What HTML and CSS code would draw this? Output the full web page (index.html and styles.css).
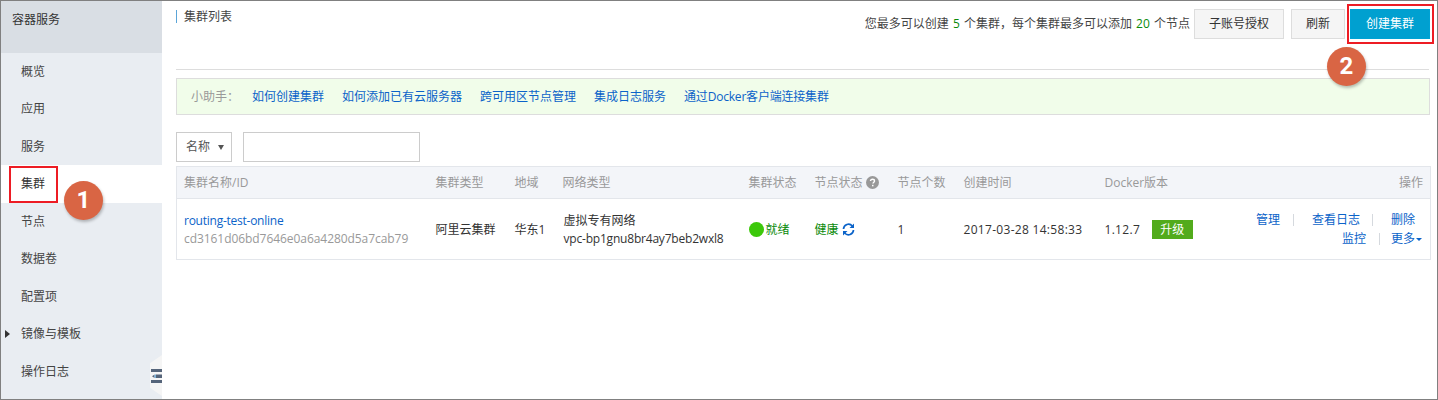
FILE: index.html
```html
<!DOCTYPE html>
<html lang="zh">
<head>
<meta charset="utf-8">
<title>集群列表</title>
<link rel="stylesheet" href="styles.css">
</head>
<body>
<div class="frame">
  <aside class="side">
    <div class="side-head">容器服务</div>
    <nav class="nav">
      <a class="nav-item">概览</a>
      <a class="nav-item">应用</a>
      <a class="nav-item">服务</a>
      <a class="nav-item active">集群</a>
      <a class="nav-item">节点</a>
      <a class="nav-item">数据卷</a>
      <a class="nav-item">配置项</a>
      <a class="nav-item caret">镜像与模板</a>
      <a class="nav-item">操作日志</a>
    </nav>
    <div class="collapse"><svg width="11" height="14" viewBox="0 0 11 14"><path d="M0 0h11v3H0zM5 5.500h6v3.500H5zM0 11h11v3H0z" fill="#56657a"/><path d="M1 7.200 3.500 5.500v3.500z" fill="#56657a"/><rect x="3.800" y="5.500" width="1" height="3.500" fill="#5ba5d8"/></svg></div>
  </aside>
  <main class="main">
    <header class="top">
      <h1 class="title">集群列表</h1>
      <div class="top-right">
        <span class="quota">您最多可以创建 <b>5</b> 个集群，每个集群最多可以添加 <b>20</b> 个节点</span>
        <button class="btn sub">子账号授权</button>
        <button class="btn">刷新</button>
        <button class="btn primary">创建集群</button>
      </div>
    </header>
    <div class="notice">
      <span class="notice-label">小助手：</span>
      <a>如何创建集群</a><a>如何添加已有云服务器</a><a>跨可用区节点管理</a><a>集成日志服务</a><a class="n-docker">通过Docker客户端连接集群</a>
    </div>
    <div class="filter">
      <div class="select">名称<i class="tri"></i></div>
      <div class="input"></div>
    </div>
    <table class="grid">
      <colgroup>
        <col class="c1"><col class="c2"><col class="c3"><col class="c4"><col class="c5"><col class="c6"><col class="c7"><col class="c8"><col class="c9"><col class="c10">
      </colgroup>
      <thead>
        <tr>
          <th>集群名称/ID</th><th>集群类型</th><th>地域</th><th>网络类型</th><th>集群状态</th>
          <th>节点状态 <svg class="help" width="13" height="13" viewBox="0 0 13 13"><circle cx="6.500" cy="6.500" r="6.500" fill="#999"/><path d="M4.500 5.100c0-1.200.9-1.900 2-1.900s2 .7 2 1.700c0 1.300-1.500 1.400-1.500 2.700" fill="none" stroke="#fff" stroke-width="1.400"/><rect x="6" y="8.800" width="1.500" height="1.500" fill="#fff"/></svg></th>
          <th>节点个数</th><th>创建时间</th><th>Docker版本</th><th class="right">操作</th>
        </tr>
      </thead>
      <tbody>
        <tr>
          <td><a class="t-name">routing-test-online</a><br><span class="muted t-id">cd3161d06bd7646e0a6a4280d5a7cab79</span></td>
          <td>阿里云集群</td>
          <td>华东1</td>
          <td class="t-net">虚拟专有网络<br><span class="t-vpc">vpc-bp1gnu8br4ay7beb2wxl8</span></td>
          <td class="ok"><span class="cell-flex"><i class="dot"></i>就绪</span></td>
          <td class="ok"><span class="cell-flex">健康<svg class="sync" width="13" height="13" viewBox="0 0 13 13"><path d="M1.500 6A5 5 0 0 1 10.300 3M11.500 7A5 5 0 0 1 2.700 10" fill="none" stroke="#0b63c9" stroke-width="1.700"/><path d="M12 0.500v4.500H7.500zM1 12.500V8h4.500z" fill="#0b63c9"/></svg></span></td>
          <td>1</td>
          <td class="t-date">2017-03-28 14:58:33</td>
          <td><span class="cell-flex"><span class="t-ver">1.12.7</span><span class="tag">升级</span></span></td>
          <td>
            <div class="ops"><a>管理</a><i class="sep"></i><a>查看日志</a><i class="sep"></i><a>删除</a></div>
            <div class="ops second"><a>监控</a><i class="sep"></i><a class="more">更多<i class="mini"></i></a></div>
          </td>
        </tr>
      </tbody>
    </table>
  </main>
  <div class="mark mark-a"></div>
  <div class="mark mark-b"></div>
  <div class="badge badge-a">1</div>
  <div class="badge badge-b">2</div>
</div>
</body>
</html>
```
FILE: styles.css
```css
* { box-sizing: border-box; }
html, body { margin: 0; padding: 0; background: #fff; }
body { font: 12px/18px "Open Sans", "Noto Sans CJK SC", sans-serif; color: #333; }
a { color: #0b63c9; text-decoration: none; }
.frame { position: relative; display: flex; width: 1438px; height: 400px; border: 1px solid #808080; overflow: hidden; }

.side { position: relative; flex: 0 0 161px; background: #e9edf2; }
.side-head { height: 52px; padding: 10px 11px; background: #d9dee4; line-height: 18px; color: #333; }
.nav { display: flex; flex-direction: column; }
.nav-item { position: relative; display: flex; align-items: center; height: 37.500px; padding-left: 20px; color: #444; }
.nav-item.active { height: 38px; margin-top: -0.500px; background: #fff; color: #333; }
.nav-item.caret::before { content: ""; position: absolute; left: 4px; top: 14px; border: 4px solid transparent; border-left: 5px solid #333; border-right: 0; }
.collapse { position: absolute; right: 0; bottom: 3px; display: flex; align-items: center; justify-content: flex-end; width: 12px; height: 41px; background: #f5f5f5; clip-path: polygon(100% 0, 100% 100%, 0 80%, 0 20%); }

.main { flex: 1; min-width: 0; padding: 0 7px 0 14px; }
.top { display: flex; justify-content: space-between; align-items: flex-start; height: 69px; margin-right: 1px; border-bottom: 1px solid #ddd; }
.title { height: 13px; margin: 9px 0 0; padding-left: 7px; border-left: 1px solid #5ba5d8; font: inherit; line-height: 13px; color: #444; }
.top-right { display: flex; align-items: flex-start; gap: 6px; margin: 8px -1px 0 0; }
.quota { margin: 6px -2px 0 0; color: #444; word-spacing: 1px; }
.quota b { font-weight: 400; color: #0a8a0a; }
.btn { height: 30px; padding: 0 14px; border: 1px solid #ddd; background: #f5f5f5; color: #333; font: inherit; white-space: nowrap; }
.sub { margin-right: 1px; }
.primary { width: 80px; margin-left: -1px; padding: 0; border-color: #00a2d4; background: #00a0d0; color: #fff; }

.notice { display: flex; align-items: center; height: 37px; margin-top: 8px; padding-left: 14px; border: 1px solid #ddd; background: #f1fdea; }
.notice-label { width: 61px; color: #999; }
.notice a { margin-right: 18px; }
.notice .n-docker { letter-spacing: -0.200px; }
.filter { display: flex; gap: 11px; margin-top: 17px; }
.select { display: flex; align-items: center; width: 56px; height: 30px; padding-left: 9px; border: 1px solid #ccc; background: #fff; color: #555; }
.tri { margin-left: 8px; border: 3.500px solid transparent; border-top: 5px solid #555; border-bottom: 0; }
.input { width: 177px; height: 30px; border: 1px solid #ccc; background: #fff; }

.grid { width: 1254px; margin-top: 4px; border: 1px solid #e3e6eb; border-collapse: collapse; table-layout: fixed; }
.c1 { width: 252px; } .c2 { width: 79px; } .c3 { width: 48px; } .c4 { width: 186px; } .c5 { width: 66px; }
.c6 { width: 83px; } .c7 { width: 66px; } .c8 { width: 141px; } .c9 { width: 95px; } .c10 { width: 238px; }
.grid th { height: 32px; padding: 0 0 0 7px; border-bottom: 1px solid #e3e6eb; background: #f3f5f9; color: #999; font-weight: 400; text-align: left; white-space: nowrap; }
.grid .right { padding-right: 7px; text-align: right; }
.grid td { height: 61px; padding: 1px 0 0 7px; color: #333; white-space: nowrap; }
.help { vertical-align: -2px; }
.muted { color: #999; }
.t-name { letter-spacing: -0.250px; }
.t-id { letter-spacing: -0.060px; }
.grid td.t-net { padding-left: 8px; }
.t-vpc { letter-spacing: -0.200px; }
.t-date { letter-spacing: 0.300px; }
.t-ver { letter-spacing: 0.300px; }
.cell-flex { display: flex; align-items: center; }
.grid td.ok { color: #0a8a0a; }
.dot { width: 15px; height: 15px; margin-right: 2px; border-radius: 50%; background: #3cc80a; }
.sync { margin-left: 3px; }
.tag { width: 41px; height: 19px; margin-left: 12px; background: #52ab1c; color: #fff; line-height: 19px; text-align: center; }
.ops { display: flex; justify-content: flex-end; align-items: center; padding-right: 15px; }
.ops .sep { width: 1px; height: 12px; margin: 0 18px 0 12px; background: #d5d9de; }
.ops .sep:first-of-type { margin-left: 13px; }
.ops.second { margin-top: 1px; padding-right: 8px; }
.ops.second .sep { margin: 0 11px 0 13px; }
.more { display: inline-flex; align-items: center; }
.mini { margin-left: 1px; border: 3px solid transparent; border-top: 3px solid #0b63c9; border-bottom: 0; }

.mark { position: absolute; border: 2px solid #ed1c24; pointer-events: none; }
.mark-a { left: 8px; top: 165px; width: 49px; height: 37px; }
.mark-b { left: 1346px; top: 3px; width: 87px; height: 40px; }
.badge { position: absolute; width: 39px; height: 39px; border-radius: 50%; background: #d96544; color: #fff; font: 700 24px/39px "Roboto", sans-serif; text-align: center; box-shadow: 1px 2px 3px rgba(0,0,0,.25); }
.badge-a { left: 63px; top: 180px; }
.badge-b { left: 1326px; top: 46px; }
```
